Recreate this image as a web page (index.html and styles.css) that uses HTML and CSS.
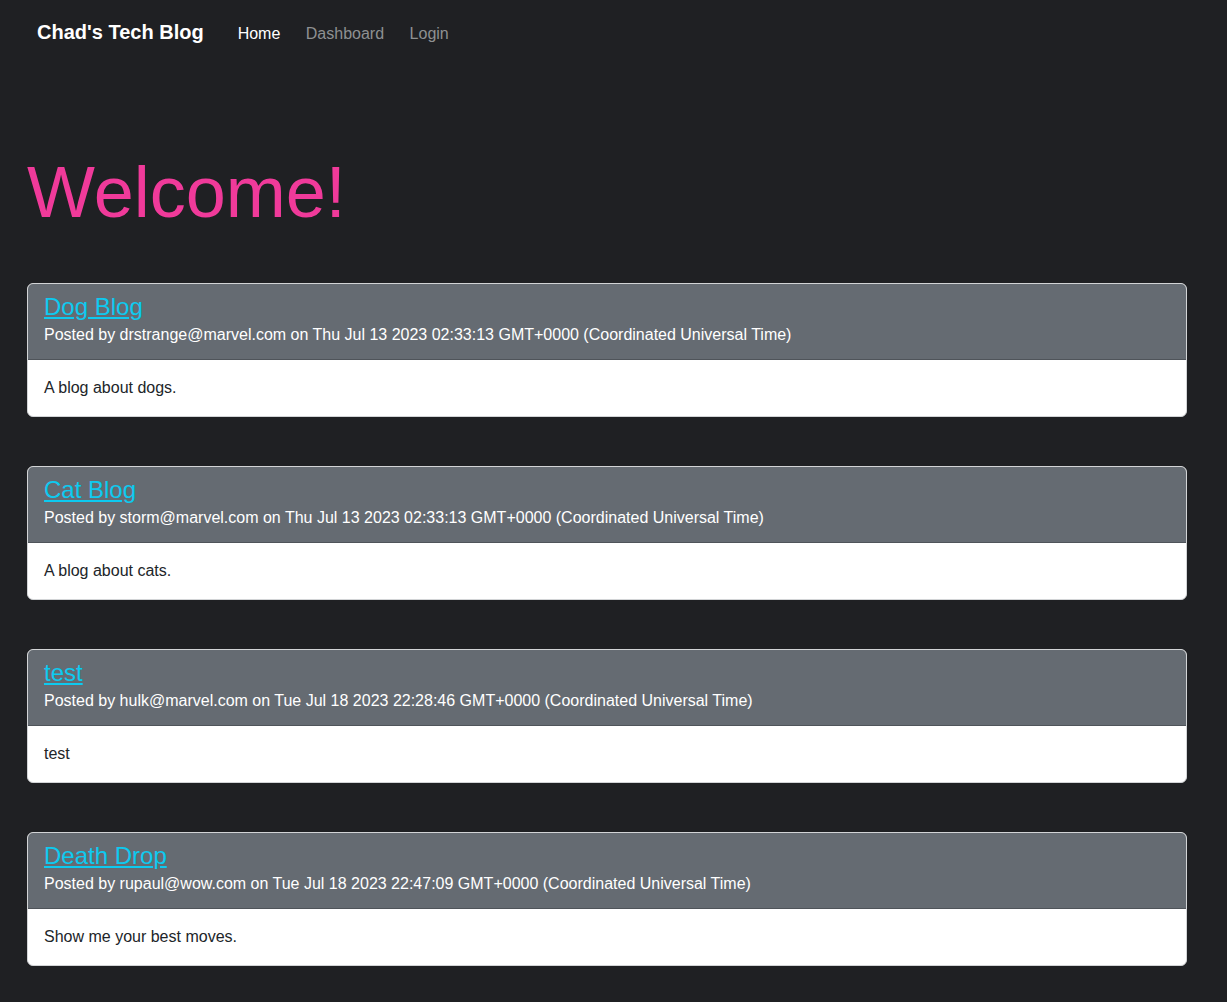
FILE: index.html
```html
<!DOCTYPE html>
<html lang="en">
<head>
<meta charset="utf-8">
<title>Chad's Tech Blog</title>
<link rel="stylesheet" href="styles.css">
</head>
<body>
<nav class="navbar">
  <a class="brand" href="#">Chad's Tech Blog</a>
  <ul class="nav-links">
    <li><a class="nav-link active" href="#">Home</a></li>
    <li><a class="nav-link" href="#">Dashboard</a></li>
    <li><a class="nav-link" href="#">Login</a></li>
  </ul>
</nav>
<main class="main">
  <h1 class="welcome">Welcome!</h1>
  <section class="posts">
    <article class="card">
      <header class="card-header">
        <h2 class="card-title"><a href="#">Dog Blog</a></h2>
        <p class="card-meta">Posted by drstrange@marvel.com on Thu Jul 13 2023 02:33:13 GMT+0000 (Coordinated Universal Time)</p>
      </header>
      <div class="card-body"><p>A blog about dogs.</p></div>
    </article>
    <article class="card">
      <header class="card-header">
        <h2 class="card-title"><a href="#">Cat Blog</a></h2>
        <p class="card-meta">Posted by storm@marvel.com on Thu Jul 13 2023 02:33:13 GMT+0000 (Coordinated Universal Time)</p>
      </header>
      <div class="card-body"><p>A blog about cats.</p></div>
    </article>
    <article class="card">
      <header class="card-header">
        <h2 class="card-title"><a href="#">test</a></h2>
        <p class="card-meta">Posted by hulk@marvel.com on Tue Jul 18 2023 22:28:46 GMT+0000 (Coordinated Universal Time)</p>
      </header>
      <div class="card-body"><p>test</p></div>
    </article>
    <article class="card">
      <header class="card-header">
        <h2 class="card-title"><a href="#">Death Drop</a></h2>
        <p class="card-meta">Posted by rupaul@wow.com on Tue Jul 18 2023 22:47:09 GMT+0000 (Coordinated Universal Time)</p>
      </header>
      <div class="card-body"><p>Show me your best moves.</p></div>
    </article>
  </section>
</main>
</body>
</html>
```
FILE: styles.css
```css
* { box-sizing: border-box; }

html, body {
  margin: 0;
  padding: 0;
  background: #1f2023;
  font-family: "Liberation Sans", Arial, sans-serif;
  color: #212529;
  font-size: 16px;
  line-height: 1.5;
}

.navbar {
  display: flex;
  align-items: baseline;
  padding: 17px 0 0 37px;
  height: 64px;
}

.brand {
  color: #ffffff;
  font-weight: bold;
  font-size: 20px;
  line-height: 30px;
  text-decoration: none;
  margin-right: 34px;
}

.nav-links {
  display: flex;
  align-items: baseline;
  list-style: none;
  margin: 0;
  padding: 0;
  gap: 25.5px;
}

.nav-link {
  color: #8e9092;
  text-decoration: none;
  font-size: 16px;
  line-height: 24px;
}

.nav-link.active {
  color: #ffffff;
}

.main {
  padding: 0 40px 36px 27px;
}

.welcome {
  margin: 85px 0 48px 0;
  color: #f03a9a;
  font-size: 72px;
  font-weight: normal;
  line-height: 86px;
}

.posts {
  display: flex;
  flex-direction: column;
  gap: 49px;
}

.card {
  background: #ffffff;
  border: 1px solid #d2d4d6;
  border-radius: 6px;
  overflow: hidden;
}

.card-header {
  background: #656b72;
  padding: 8px 16px 12px 16px;
  border-bottom: 1px solid #4f545a;
}

.card-title {
  margin: 0;
  font-size: 24px;
  font-weight: normal;
  line-height: 29px;
}

.card-title a {
  color: #0dcaf0;
  text-decoration: underline;
}

.card-meta {
  margin: 2px 0 0 0;
  color: #ffffff;
  font-size: 16px;
  line-height: 24px;
}

.card-body {
  padding: 16px;
}

.card-body p {
  margin: 0;
  line-height: 24px;
  color: #212529;
}
```
